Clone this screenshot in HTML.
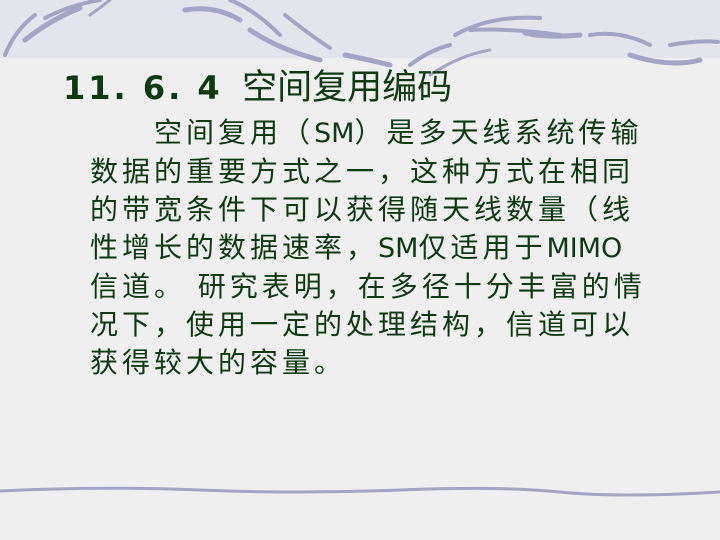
<!DOCTYPE html>
<html><head><meta charset="utf-8"><style>
html,body{margin:0;padding:0}
body{width:720px;height:540px;overflow:hidden;position:relative;background:#efefef;font-family:"Liberation Sans","Noto Sans CJK SC",sans-serif;color:#0e3a12}
.band{position:absolute;left:0;top:0;width:720px;height:58px;background:#e4e4ec}
.t{position:absolute;white-space:nowrap}
.title{left:63px;top:68px;font-size:35px;line-height:40px}
.title b{font-family:"DejaVu Sans","Liberation Sans",sans-serif;font-weight:bold;font-size:32px;letter-spacing:3px}
.body{left:90px;top:114px;font-size:28px;line-height:38px;letter-spacing:4px}
.l{letter-spacing:0;font-family:"DejaVu Sans",sans-serif;font-size:27px}
</style></head><body>
<div class="band"></div>
<svg style="position:absolute;left:0;top:0" width="720" height="520">
<g stroke="#a4a4c4" stroke-linecap="round" fill="none">
<path d="M5 55 Q15 30 35 15" stroke-width="4"/>
<path d="M25 40 Q50 20 80 8" stroke-width="5"/>
<path d="M45 18 Q70 5 100 0" stroke-width="4"/>
<path d="M90 15 Q100 8 110 0" stroke-width="3"/>
<path d="M185 10 Q215 5 240 20" stroke-width="5"/>
<path d="M230 0 Q255 10 280 35" stroke-width="4"/>
<path d="M250 30 Q280 50 320 60" stroke-width="5"/>
<path d="M285 15 Q310 35 330 48" stroke-width="4"/>
<path d="M345 55 Q370 60 390 65" stroke-width="5"/>
<path d="M410 65 Q430 50 450 45" stroke-width="4"/>
<path d="M430 75 Q460 55 490 50" stroke-width="3"/>
<path d="M455 35 Q490 15 540 18" stroke-width="4"/>
<path d="M470 30 Q510 28 560 35" stroke-width="4"/>
<path d="M525 33 Q545 38 580 35" stroke-width="5"/>
<path d="M590 35 Q620 30 650 45" stroke-width="4"/>
<path d="M630 55 Q670 68 700 60" stroke-width="5"/>
<path d="M670 45 Q700 40 718 42" stroke-width="4"/>
<path d="M0 491 Q100 486 200 490 T400 490 T560 492 T720 492" stroke-width="3"/>
</g></svg>
<div class="t title"><b>11. 6. 4</b>&nbsp;&nbsp;空间复用编码</div>
<div class="t body">　　空间复用（<span class="l">SM</span>）是多天线系统传输<br>数据的重要方式之一，这种方式在相同<br>的带宽条件下可以获得随天线数量（线<br>性增长的数据速率，<span class="l">SM</span>仅适用于<span class="l">MIMO</span><br>信道。 研究表明，在多径十分丰富的情<br>况下，使用一定的处理结构，信道可以<br>获得较大的容量。</div>
</body></html>
